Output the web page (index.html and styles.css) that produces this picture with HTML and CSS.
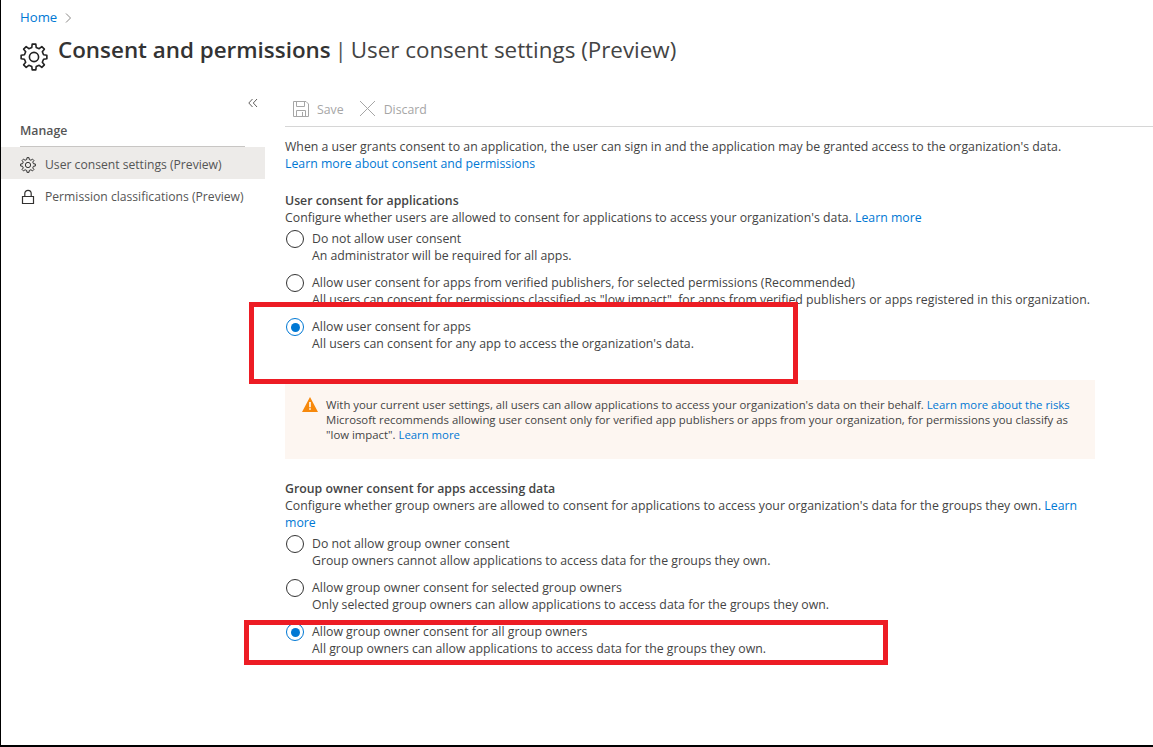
FILE: index.html
```html
<!DOCTYPE html>
<html lang="en">
  <head>
    <meta charset="UTF-8" />
    <title>Consent and permissions</title>
    <link rel="stylesheet" href="styles.css">
  </head>
  <body>
    <div class="page">
      <nav class="crumbs">
        <a href="#">Home</a>
        <svg class="crumb-arrow" width="8" height="10" viewBox="0 0 8 10"><path d="M2 .5 6.500 5 2 9.500" fill="none" stroke="#8a8886"/></svg>
      </nav>
      <header class="title-row">
        <svg class="title-icon" width="28" height="28" viewBox="0 0 28 28"><use href="#gear"/></svg>
        <h1><strong>Consent and permissions</strong> <span class="sep">|</span> User consent settings (Preview)</h1>
      </header>

      <div class="columns">
        <aside class="sidebar">
          <div class="collapse">
            <svg width="10" height="10" viewBox="0 0 10 10"><path d="M4.500 1 .8 5l3.700 4M9 1 5.300 5 9 9" fill="none" stroke="#605e5c"/></svg>
          </div>
          <div class="manage">Manage</div>
          <a class="side-item active" href="#">
            <svg width="16" height="16" viewBox="0 0 28 28"><use href="#gear"/></svg>
            User consent settings (Preview)
          </a>
          <a class="side-item" href="#">
            <svg width="16" height="16" viewBox="0 0 16 16"><path d="M2.500 7.500h11v7h-11zM4.800 7.500V4.500a3.200 3.200 0 0 1 6.400 0v3" fill="none" stroke="#323130" stroke-width="1.200"/></svg>
            Permission classifications (Preview)
          </a>
        </aside>

        <main class="content">
          <div class="toolbar">
            <span class="tool">
              <svg width="16" height="16" viewBox="0 0 16 16"><path d="M.5.500h12.500l2.500 2.500v12.500H.5zM3.500.5v5h8v-5M3.500 15.500v-6h9v6M9.500 11v4" fill="none" stroke="#a6a6a6"/></svg>
              <span class="tool-label">Save</span>
            </span>
            <span class="tool">
              <svg width="17" height="17" viewBox="0 0 17 17"><path d="M1 1l15 15M16 1 1 16" fill="none" stroke="#a6a6a6"/></svg>
              <span class="tool-label">Discard</span>
            </span>
          </div>

          <p class="intro">
            When a user grants consent to an application, the user can sign in and the application may be granted access to the organization's data.<br>
            <a href="#">Learn more about consent and permissions</a>
          </p>

          <section class="group">
            <h2>User consent for applications</h2>
            <p>Configure whether users are allowed to consent for applications to access your organization's data. <a href="#">Learn more</a></p>
            <div class="option">
              <span class="radio"></span>
              <div>Do not allow user consent<br>An administrator will be required for all apps.</div>
            </div>
            <div class="option">
              <span class="radio"></span>
              <div>Allow user consent for apps from verified publishers, for selected permissions (Recommended)<br>All users can consent for permissions classified as "low impact", for apps from verified publishers or apps registered in this organization.</div>
            </div>
            <div class="option">
              <span class="radio checked"></span>
              <div>Allow user consent for apps<br>All users can consent for any app to access the organization's data.</div>
            </div>
          </section>

          <div class="alert">
            <svg width="16" height="15" viewBox="0 0 16 15"><path d="M8 0 16 15H0z" fill="#f7890c"/><path d="M7.200 5h1.600v5.200H7.200zM7.200 11.200h1.600v1.600H7.200z" fill="#fff"/></svg>
            <p>With your current user settings, all users can allow applications to access your organization's data on their behalf. <a href="#">Learn more about the risks</a><br>
            Microsoft recommends allowing user consent only for verified app publishers or apps from your organization, for permissions you classify as<br>
            "low impact". <a href="#">Learn more</a></p>
          </div>

          <section class="group">
            <h2>Group owner consent for apps accessing data</h2>
            <p>Configure whether group owners are allowed to consent for applications to access your organization's data for the groups they own. <a href="#">Learn more</a></p>
            <div class="option">
              <span class="radio"></span>
              <div>Do not allow group owner consent<br>Group owners cannot allow applications to access data for the groups they own.</div>
            </div>
            <div class="option">
              <span class="radio"></span>
              <div>Allow group owner consent for selected group owners<br>Only selected group owners can allow applications to access data for the groups they own.</div>
            </div>
            <div class="option">
              <span class="radio checked"></span>
              <div>Allow group owner consent for all group owners<br>All group owners can allow applications to access data for the groups they own.</div>
            </div>
          </section>
        </main>
      </div>

      <div class="mark mark-apps"></div>
      <div class="mark mark-owners"></div>
    </div>

    <svg width="0" height="0" class="defs">
      <symbol id="gear" viewBox="0 0 28 28">
        <path d="M11.800 4.450 12.190 1.130H15.810L16.200 4.450 19.190 5.690 21.820 3.620 24.380 6.180 22.310 8.810 23.550 11.800 26.870 12.190V15.810L23.550 16.200 22.310 19.190 24.380 21.820 21.820 24.380 19.190 22.310 16.200 23.550 15.810 26.870H12.190L11.800 23.550 8.810 22.310 6.180 24.380 3.620 21.820 5.690 19.190 4.450 16.200 1.130 15.810V12.190L4.450 11.800 5.690 8.810 3.620 6.180 6.180 3.620 8.810 5.690z" fill="none" stroke="#222" stroke-width="1.600" stroke-linejoin="round"/>
        <circle cx="14" cy="14" r="4.600" fill="none" stroke="#222" stroke-width="1.600"/>
      </symbol>
    </svg>
  </body>
</html>
```

FILE: styles.css
```css
* {
  box-sizing: border-box;
}

html,
body {
  margin: 0;
  height: 100%;
}

body {
  font-family: "Open Sans", "Noto Sans", sans-serif;
  font-size: 12.3px;
  line-height: 17px;
  color: #444;
  background-color: white;
}

a {
  color: #0078d4;
  text-decoration: none;
}

p {
  margin: 0;
}

.defs {
  position: absolute;
}

.page {
  position: relative;
  height: 747px;
  overflow: hidden;
  border-left: 1px solid black;
  border-bottom: 2px solid black;
}

.crumbs {
  display: flex;
  align-items: center;
  gap: 7px;
  padding: 9px 0 0 19px;
  font-size: 13.2px;
}

.title-row {
  display: flex;
  align-items: flex-start;
  gap: 10px;
  height: 62px;
  padding: 10px 0 0 19px;
}

.title-icon {
  flex: none;
  margin-top: 7px;
}

h1 {
  margin: 0;
  font-size: 22.4px;
  line-height: 28px;
  font-weight: 400;
  color: #444;
}

h1 strong {
  font-weight: 600;
  color: #333;
}

.sep {
  margin: 0 -2px;
  color: #555;
}

.columns {
  display: flex;
}

.sidebar {
  flex: none;
  width: 264px;
}

.collapse {
  display: flex;
  justify-content: flex-end;
  height: 34px;
  padding: 10px 7px 0 0;
}

.manage {
  margin: 0 20px 0 19px;
  height: 25px;
  border-bottom: 1px solid #c8c6c4;
  font-weight: 600;
  color: #555;
}

.side-item {
  display: flex;
  align-items: center;
  gap: 9px;
  height: 32px;
  padding: 3px 0 0 19px;
  font-size: 12.15px;
  color: #555;
}

.side-item.active {
  background-color: #edebe9;
}

.content {
  flex: 1;
  padding: 0 0 0 20px;
}

.toolbar {
  display: flex;
  align-items: center;
  gap: 15px;
  height: 36px;
  margin-top: 3px;
  padding: 0 0 0 8px;
  border-bottom: 1px solid #d6d6d6;
  color: #a6a6a6;
}

.tool {
  display: flex;
  align-items: center;
  gap: 8px;
}

.tool-label {
  padding-top: 2px;
}

.intro {
  margin-top: 11px;
}

.group {
  margin-top: 20px;
}

.group h2 {
  margin: 0;
  font-size: 12.3px;
  line-height: 17px;
  font-weight: 600;
  color: #444;
}

.group > p {
  width: 800px;
}

.option {
  display: flex;
  gap: 8px;
  height: 44px;
  padding-top: 4px;
}

.radio {
  flex: none;
  width: 18px;
  height: 18px;
  margin-left: 1px;
  border: 1px solid #333;
  border-radius: 50%;
}

.radio.checked {
  padding: 3.500px;
  border-color: #0078d4;
}

.radio.checked::after {
  content: "";
  display: block;
  width: 9px;
  height: 9px;
  border-radius: 50%;
  background-color: #0078d4;
}

.alert {
  display: flex;
  gap: 8px;
  width: 810px;
  height: 79px;
  margin-top: 22px;
  padding: 17px 0 0 17px;
  background-color: #fdf6f1;
  font-size: 11.35px;
  line-height: 15px;
}

.alert svg {
  flex: none;
}

.alert + .group {
  margin-top: 21px;
}

.mark {
  position: absolute;
  border: 5px solid #ed1c24;
}

.mark-apps {
  left: 248px;
  top: 302px;
  width: 549px;
  height: 82px;
}

.mark-owners {
  left: 243px;
  top: 620px;
  width: 644px;
  height: 45px;
}
```
